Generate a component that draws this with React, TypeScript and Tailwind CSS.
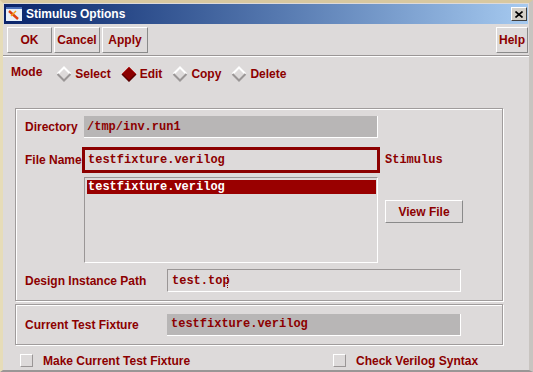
const label = "font-['Liberation_Sans',Arial,sans-serif] font-bold text-[12px] text-[#8c0000] leading-none";
const mono = "font-['Liberation_Mono','Courier_New',monospace] font-bold text-[12px] text-[#8c0000] leading-none";
const raised = "border border-t-white border-l-white border-b-[#8a8a8a] border-r-[#8a8a8a]";
const sunken = "border border-t-[#9a9696] border-l-[#9a9696] border-b-white border-r-white";
const etched = "border border-[#a09c9c] shadow-[inset_1px_1px_0_#ffffff,1px_1px_0_#ffffff]";

function Diamond({ on }: { on?: boolean }) {
  return (
    <svg width="16" height="16" viewBox="0 0 16 16" className="shrink-0">
      {on ? (
        <>
          <polygon points="8,1 15,8 8,15 1,8" fill="#8c0000" />
          <polyline points="15,8 8,15 1,8" fill="none" stroke="#5a0000" strokeWidth="1.5" />
          <polyline points="1,8 8,1 15,8" fill="none" stroke="#b83030" strokeWidth="1" />
        </>
      ) : (
        <>
          <polyline points="1.5,8 8,1.5 14.5,8" fill="none" stroke="#ffffff" strokeWidth="2" />
          <polyline points="14.5,8 8,14.5 1.5,8" fill="none" stroke="#9a9696" strokeWidth="2" />
        </>
      )}
    </svg>
  );
}

function Btn({ children, className = "" }: { children: React.ReactNode; className?: string }) {
  return (
    <div className={`${raised} ${label} flex items-center justify-center ${className}`}>{children}</div>
  );
}

function Check({ text }: { text: string }) {
  return (
    <div className="flex items-center">
      <div className="w-[13px] h-[13px] border border-t-white border-l-white border-b-[#9a9696] border-r-[#9a9696]" />
      <span className={`${label} ml-[10px]`}>{text}</span>
    </div>
  );
}

export default function App() {
  const modes = [
    { name: "Select", on: false },
    { name: "Edit", on: true },
    { name: "Copy", on: false },
    { name: "Delete", on: false },
  ];
  return (
    <div className="w-[533px] h-[372px] overflow-hidden bg-[#dddada] border-t-[3px] border-l-[3px] border-r-[4px] border-b-[2px] border-t-[#d8c8a0] border-l-[#e6dcb8] border-r-[#c8c4c0] border-b-[#9a9696] flex flex-col">
      {/* Title bar */}
      <div className="h-[20px] mt-[1px] mx-[1px] flex items-center bg-gradient-to-r from-[#0a246a] to-[#a6caf0]">
        <svg width="16" height="14" viewBox="0 0 16 14" className="ml-[2px]">
          <rect x="0" y="0" width="16" height="14" fill="#e8f0f8" />
          <rect x="0" y="0" width="16" height="2" fill="#4a70b8" />
          <line x1="3" y1="4" x2="12" y2="12" stroke="#e04010" strokeWidth="2.5" />
          <line x1="10" y1="4" x2="5" y2="9" stroke="#f0a020" strokeWidth="1.5" />
        </svg>
        <span className="ml-[4px] font-['Liberation_Sans',Arial,sans-serif] font-bold text-[12px] text-white leading-none">Stimulus Options</span>
        <div className="ml-auto mr-[1px] w-[16px] h-[14px] bg-[#d4d0c8] border border-t-white border-l-white border-b-[#404040] border-r-[#404040] flex items-center justify-center">
          <svg width="8" height="7" viewBox="0 0 8 7">
            <path d="M0.5 0.5 L7.5 6.5 M7.5 0.5 L0.5 6.5" stroke="#000" strokeWidth="1.6" />
          </svg>
        </div>
      </div>

      {/* Toolbar */}
      <div className="flex mt-[3px] pl-[4px] pr-[1px] h-[26px]">
        <Btn className="w-[45px]">OK</Btn>
        <Btn className="w-[46px] ml-[2px]">Cancel</Btn>
        <Btn className="w-[46px] ml-[2px]">Apply</Btn>
        <Btn className="w-[32px] ml-auto">Help</Btn>
      </div>
      <div className="mt-[2px] h-[2px] border-t border-t-[#9a9696] border-b border-b-white" />

      {/* Mode */}
      <div className="flex items-center mt-[9px] h-[16px] pl-[8px]">
        <span className={`${label} -mt-[4px]`}>Mode</span>
        <div className="flex items-center ml-[14px]">
          {modes.map((m) => (
            <div key={m.name} className="flex items-center mr-[10px]">
              <Diamond on={m.on} />
              <span className={`${label} ml-[3px]`}>{m.name}</span>
            </div>
          ))}
        </div>
      </div>

      {/* Group 1 */}
      <div className={`${etched} mt-[26px] ml-[12px] w-[488px] h-[193px] pl-[9px] pt-[7px] flex flex-col`}>
        <div className="flex items-center h-[22px]">
          <span className={`${label} w-[59px]`}>Directory</span>
          <div className={`${mono} w-[294px] h-[22px] bg-[#b8b6b6] border-b border-r border-b-white border-r-white flex items-center pl-[3px]`}>/tmp/inv.run1</div>
        </div>
        <div className="flex items-center h-[26px] mt-[9px]">
          <span className={`${label} w-[57px]`}>File Name</span>
          <div className={`${mono} w-[298px] h-[26px] border-[3px] border-[#8c0000] flex items-center pl-[3px]`}>testfixture.verilog</div>
          <span className={`${mono} ml-[5px]`}>Stimulus</span>
        </div>
        <div className="flex mt-[4px]">
          <div className={`ml-[59px] w-[294px] h-[86px] ${sunken} pt-[2px] pl-[2px]`}>
            <div className={`${mono} text-white bg-[#990000] w-[289px] h-[14px] flex items-center pl-[1px]`}>testfixture.verilog</div>
          </div>
          <Btn className="ml-[7px] mt-[23px] w-[78px] h-[23px]">View File</Btn>
        </div>
        <div className="flex items-center h-[23px] mt-[6px]">
          <span className={`${label} w-[142px]`}>Design Instance Path</span>
          <div className={`${mono} w-[294px] h-[23px] ${sunken} flex items-center pl-[4px]`}>
            test.top
            <span className="ml-[-3px] mt-[2px] w-[1px] h-[13px] border-l border-dotted border-[#8c0000]" />
          </div>
        </div>
      </div>

      {/* Group 2 */}
      <div className={`${etched} mt-[3px] ml-[12px] w-[488px] h-[41px] pl-[9px] flex items-center`}>
        <span className={`${label} w-[142px]`}>Current Test Fixture</span>
        <div className={`${mono} w-[294px] h-[22px] bg-[#b8b6b6] border-b border-r border-b-white border-r-white flex items-center pl-[4px]`}>testfixture.verilog</div>
      </div>

      {/* Options */}
      <div className="flex items-center mt-[9px] ml-[17px]">
        <div className="w-[313px]">
          <Check text="Make Current Test Fixture" />
        </div>
        <Check text="Check Verilog Syntax" />
      </div>
    </div>
  );
}
